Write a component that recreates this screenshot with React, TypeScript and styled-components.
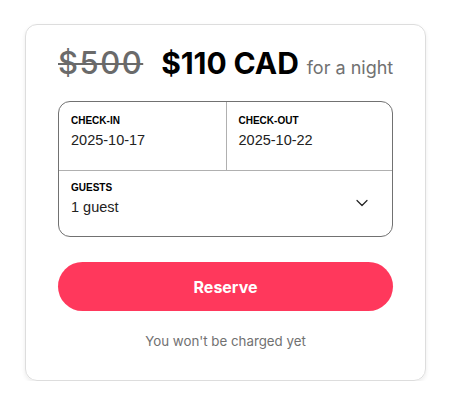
import React from "react";
import styled, { createGlobalStyle } from "styled-components";

const GlobalStyle = createGlobalStyle`
  html, body {
    margin: 0;
    padding: 0;
    background: #ffffff;
    font-family: Inter, "Noto Sans", sans-serif;
    color: #222222;
  }
`;

const Page = styled.div`
  padding: 24px 0 0 25px;
`;

const Card = styled.div`
  box-sizing: border-box;
  width: 401px;
  border: 1px solid #dddddd;
  border-radius: 12px;
  box-shadow: 0 2px 4px rgba(0, 0, 0, 0.08);
  padding: 20px 32px 29px;
`;

const PriceRow = styled.div`
  display: flex;
  align-items: baseline;
  gap: 18px;
  line-height: 36px;
  margin-bottom: 15px;
  white-space: nowrap;
`;

const OldPrice = styled.span`
  font-size: 31px;
  font-weight: 500;
  color: #6a6a6a;
  letter-spacing: 1.5px;
  text-decoration: line-through;
  text-decoration-thickness: 2px;
`;

const Price = styled.span`
  font-size: 30px;
  font-weight: 700;
  color: #000000;
  letter-spacing: -0.1px;
`;

const PerNight = styled.span`
  font-size: 18px;
  color: #717171;
  margin-left: -10px;
`;

const Picker = styled.div`
  border: 1px solid #717171;
  border-radius: 12px;
  overflow: hidden;
  font-family: "Liberation Sans", Arial, sans-serif;
`;

const DateRow = styled.div`
  display: grid;
  grid-template-columns: 1fr 1fr;
  border-bottom: 1px solid #b0b0b0;
`;

const Cell = styled.div<{ $divider?: boolean }>`
  box-sizing: border-box;
  height: 68px;
  padding: 12px 12px;
  border-left: ${(p) => (p.$divider ? "1px solid #b0b0b0" : "none")};
`;

const GuestCell = styled.div`
  box-sizing: border-box;
  height: 65px;
  padding: 10px 24px 0 12px;
  display: flex;
  align-items: flex-start;
  justify-content: space-between;
`;

const Label = styled.div`
  font-size: 10px;
  font-weight: 700;
  color: #000000;
  line-height: 14px;
`;

const Value = styled.div`
  font-size: 14.5px;
  color: #222222;
  line-height: 20px;
  margin-top: 2px;
`;

const Chevron = styled.svg`
  width: 12px;
  height: 8px;
  margin-top: 18px;
`;

const ReserveButton = styled.button`
  display: block;
  width: 100%;
  height: 49px;
  margin-top: 25px;
  border: none;
  border-radius: 25px;
  background: #ff385c;
  color: #ffffff;
  font-family: Inter, "Noto Sans", sans-serif;
  font-size: 16px;
  font-weight: 700;
  cursor: pointer;
`;

const Note = styled.div`
  margin-top: 20px;
  text-align: center;
  font-size: 13.3px;
  color: #717171;
  line-height: 20px;
`;

export default function App() {
  return (
    <>
      <GlobalStyle />
      <Page>
        <Card>
          <PriceRow>
            <OldPrice>$500</OldPrice>
            <Price>$110 CAD</Price>
            <PerNight>for a night</PerNight>
          </PriceRow>
          <Picker>
            <DateRow>
              <Cell>
                <Label>CHECK-IN</Label>
                <Value>2025-10-17</Value>
              </Cell>
              <Cell $divider>
                <Label>CHECK-OUT</Label>
                <Value>2025-10-22</Value>
              </Cell>
            </DateRow>
            <GuestCell>
              <div>
                <Label>GUESTS</Label>
                <Value>1 guest</Value>
              </div>
              <Chevron viewBox="0 0 12 8" fill="none">
                <path d="M1 1.5l5 5 5-5" stroke="#222" strokeWidth="1.2" strokeLinecap="round" strokeLinejoin="round" />
              </Chevron>
            </GuestCell>
          </Picker>
          <ReserveButton>Reserve</ReserveButton>
          <Note>You won't be charged yet</Note>
        </Card>
      </Page>
    </>
  );
}
